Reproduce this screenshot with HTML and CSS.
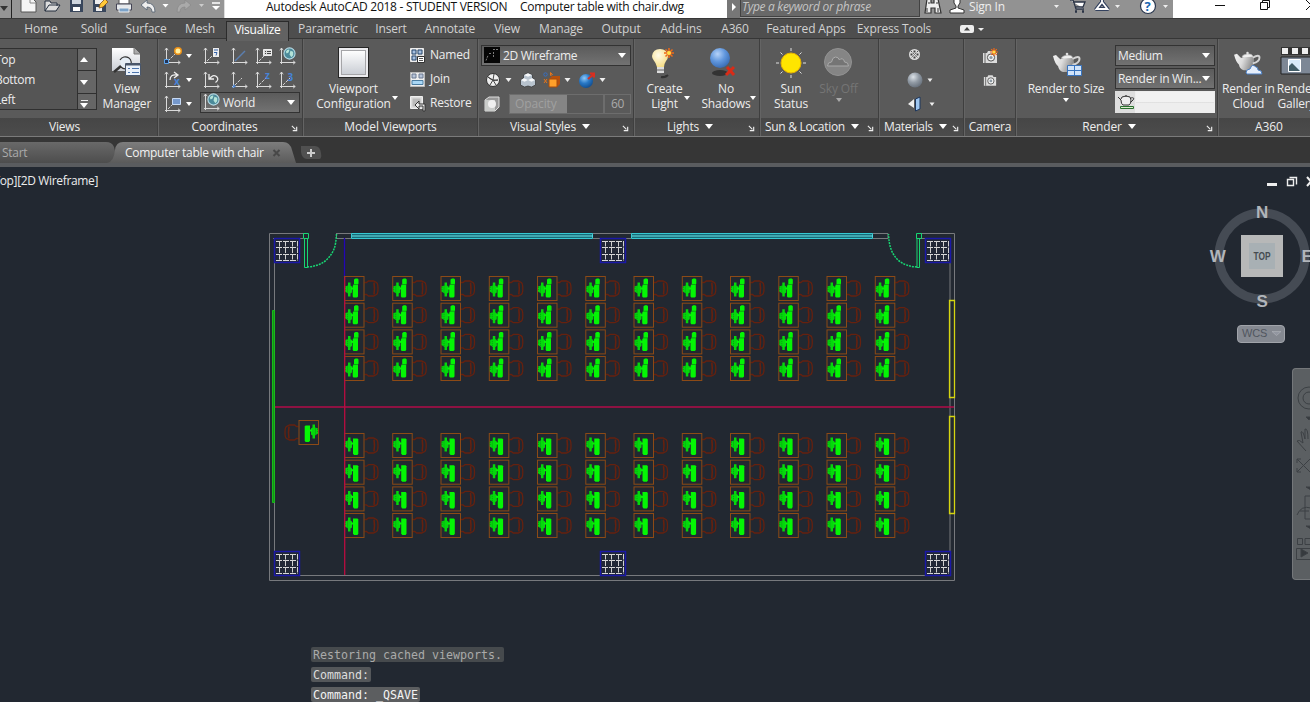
FILE: index.html
```html
<!DOCTYPE html>
<html lang="en">
<head>
<meta charset="utf-8">
<title>Autodesk AutoCAD 2018</title>
<link rel="stylesheet" href="styles.css">
</head>
<body>
<svg class="defs" width="0" height="0">
  <defs>
    <linearGradient id="paper" x2="0" y2="1"><stop offset="0" stop-color="#fff"/><stop offset="1" stop-color="#c9cdd4"/></linearGradient>
    <radialGradient id="ball" cx=".38" cy=".3" r=".75"><stop offset="0" stop-color="#b5d2f8"/><stop offset=".5" stop-color="#6197dd"/><stop offset="1" stop-color="#3568b0"/></radialGradient>
    <radialGradient id="grayball" cx=".38" cy=".3" r=".75"><stop offset="0" stop-color="#dce2e8"/><stop offset=".5" stop-color="#929ba5"/><stop offset="1" stop-color="#646d78"/></radialGradient>
    <radialGradient id="blueball" cx=".38" cy=".3" r=".75"><stop offset="0" stop-color="#8ec8f8"/><stop offset=".5" stop-color="#2878c6"/><stop offset="1" stop-color="#114b8c"/></radialGradient>
    <radialGradient id="bulb" cx=".4" cy=".35" r=".7"><stop offset="0" stop-color="#fffbe8"/><stop offset="1" stop-color="#f5dc83"/></radialGradient>
    <linearGradient id="pot" x2="1" y2=".3"><stop offset="0" stop-color="#f4f4f4"/><stop offset=".5" stop-color="#dcdcdc"/><stop offset="1" stop-color="#8f8f8f"/></linearGradient>
    <symbol id="axis" viewBox="0 0 18 18"><path d="M2.500 1v16M1 15.500h15" stroke="#dadada" fill="none"/><path d="M.800 3.300L2.500 1l1.700 2.300M14 13.800l2.300 1.700-2.300 1.700" stroke="#dadada" fill="none" stroke-width=".9"/></symbol>
    <symbol id="diag" viewBox="0 0 18 18"><path d="M4 14l7-7" stroke="#d0d0d0" stroke-dasharray="3 1"/></symbol>
    <symbol id="globe" viewBox="0 0 14 14"><circle cx="7" cy="7" r="6" fill="#4b8a9a" stroke="#b6dbe6" stroke-width="1.200"/><path d="M3 5q2-3 4-2l-1 3-2 1zM8 4l3 1v4l-2 2-2-3z" fill="#b4e3d8"/></symbol>
    <symbol id="launch" viewBox="0 0 8 8"><path d="M1 1l4 4" stroke="#eee" stroke-width="1.200"/><path d="M6.500 2v4.500H2" stroke="#eee" fill="none" stroke-width="1.300"/></symbol>
    <symbol id="spark" viewBox="0 0 10 10"><path d="M5 0v10M0 5h10M1.500 1.500l7 7M8.500 1.500l-7 7" stroke="#f06a18" stroke-width="1.500"/><circle cx="5" cy="5" r="2" fill="#ffe14a"/></symbol>
    <symbol id="teapot" viewBox="0 0 30 24"><path d="M1 5l3-1 3 3q2 2 2 1 6-3 12-1 2 5 0 9-2 5-5 5h-5q-4-1-5-6Q3 13 1 5z" fill="url(#pot)"/><path d="M20.500 8q7-4 7 0 0 4-7 6" fill="none" stroke="#d4d4d4" stroke-width="2"/><path d="M9 7.500q1-3 6-3.500t6 3" fill="#eee" stroke="#999" stroke-width=".6"/><circle cx="15" cy="3" r="1.300" fill="#ddd"/></symbol>
    <symbol id="camera" viewBox="0 0 16 14"><path d="M1 3h4l1-2h5l1 2h3v10H1z" fill="#ddd"/><path d="M3 3v10" stroke="#666"/><circle cx="9" cy="7.500" r="3.600" fill="#f2f2f2" stroke="#555"/><circle cx="9" cy="7.500" r="1.600" fill="#8d9aa5"/></symbol>
    <g id="desk">
      <path d="M20.500 6.500h2l2-1.500h5l3 1.500q1.500 1 1.500 6t-1.500 6l-3 1.500h-5l-2-1.500h-2" stroke="#66210f" stroke-width="1.300" fill="none"/>
      <path d="M30 6.500q1 6 0 12" stroke="#66210f" stroke-width="1.600" fill="none"/>
      <rect x=".5" y=".5" width="19.500" height="24" fill="#222831" stroke="#8c4a16"/>
    </g>
    <g id="pcA"><path d="M10 3.500l1.500-1h2l1 1v4l-.5 1v12l-1 1h-3.500l-.8-1V10l1.300-2z" fill="#04f604"/><path d="M9 8.500h5" stroke="#127a1c" stroke-width=".7"/><path d="M4 6.500h2.500v3l1.500 1v6l-1.500 1v3H4v-3l-3-2v-5l3-1z" fill="#04d80b"/><path d="M1.500 11v4M3.500 9.500v7" stroke="#0b7f18" stroke-width=".7" stroke-dasharray="1 1"/><path d="M7 12.500h2.500" stroke="#06f407" stroke-width="2"/></g>
    <g id="pcB"><path d="M9 5.500h4.500l.8 1v14l-.8 1.500h-3.500l-1-1.500z" fill="#04f604"/><path d="M4 4.500h2.500v3l1.500 1v6l-1.500 1v3H4v-3l-3-2v-5l3-1z" fill="#04d80b"/><path d="M1.500 9v4M3.500 7.500v7" stroke="#0b7f18" stroke-width=".7" stroke-dasharray="1 1"/><path d="M7 10.500h2.500" stroke="#06f407" stroke-width="2"/></g>
    <g id="rowA"><use href="#desk"/><use href="#pcA"/></g>
    <g id="rowB"><use href="#desk"/><use href="#pcB"/></g>
    <g id="colA"><use href="#rowA"/><use href="#rowA" y="26.700"/><use href="#rowA" y="53.400"/><use href="#rowA" y="80"/></g>
    <g id="colB"><use href="#rowB"/><use href="#rowB" y="26.700"/><use href="#rowB" y="53.400"/><use href="#rowB" y="80"/></g>
    <g id="pillar"><rect x=".5" y=".5" width="25" height="24" fill="#222836" stroke="#1b18a8" stroke-width="1.500"/><path d="M2 3.500h21M2 9.500h21M2 16.500h21M2 22.500h21" stroke="#d8d8d8" stroke-dasharray="6 1"/><path d="M5.500 3v20M11.500 3v20M18.500 3v20M23.500 3v20" stroke="#d0d0d0" stroke-dasharray="5.500 1"/></g>
  </defs>
</svg>

<header class="titlebar">
  <div class="app-button"><i class="caret dark"></i></div>
  <div class="quick">
    <svg width="213" height="18" viewBox="12 0 213 18">
      <path d="M21-3h10l5 5v10H21z" fill="#f5f5f5" stroke="#555"/><path d="M30-3v6h6" fill="none" stroke="#888"/>
      <path d="M45 11V1h5l1 2h6v3M45 11l4-6h11l-4 6z" fill="#ddd" stroke="#222c3c"/>
      <path d="M70-2h13v14H70z" fill="#38465c"/><path d="M72-2h9v6h-9z" fill="#cfd6df"/><path d="M73 7h7v4h-7z" fill="#fff"/>
      <path d="M93-2h13v14H93z" fill="#38465c"/><path d="M95-2h9v6h-9zM96 7h6v4h-6z" fill="#eee"/><path d="M99 8l1-4 5-5 3 3-5 5z" fill="#ffc93a" stroke="#81501b" stroke-width=".8"/>
      <path d="M119-1h10v5h-10z" fill="#fff" stroke="#555"/><path d="M116.500 4h15v6h-15z" fill="#e5e8eb" stroke="#445"/><path d="M119 8h10v4h-10z" fill="#7ba2c8" stroke="#eee"/>
      <path d="M141 5l6-5v3q8 0 8 9h-3q0-5-5-5v3z" fill="#eee" stroke="#526070" stroke-width=".8"/>
      <path d="M191 5l-6-5v3q-8 0-8 9h3q0-5 5-5v3z" fill="#aaa" stroke="#8c8c8c" stroke-width=".8"/>
      <path d="M162.500 4h6l-3 3.500zM212 6h8l-4 4z" fill="#fff"/><path d="M199 4h5l-2.500 3z" fill="#ccc"/><path d="M212 3h8" stroke="#fff" stroke-width="1.500"/>
    </svg>
  </div>
  <div class="title"><span class="t1">Autodesk AutoCAD 2018 - STUDENT VERSION</span><span>Computer table with chair.dwg</span></div>
  <div class="search-arrow"><svg width="6" height="8"><path d="M1 0l4 4-4 4z" fill="#fff"/></svg></div>
  <div class="search">Type a keyword or phrase</div>
  <div class="account">
    <svg width="45" height="18" viewBox="919 0 45 18"><path d="M926-1h4v4h3v-4h4l3 14h-6V8h-4v5h-6zM927 3h2M935 3h2" fill="#eee" stroke="#333" stroke-width="1.200"/><path d="M926 8v4M937 8v4" stroke="#333"/><path d="M953-2h6v5l-2 3v2l6 2v3h-14v-3l6-2V6l-2-3z" fill="#fff" stroke="#333"/></svg>
    <span class="signin">Sign In</span>
    <svg width="125" height="18" viewBox="1048 0 125 18"><path d="M1054 5h5l-2.500 3zM1115 5h5l-2.500 3zM1163 5h5l-2.500 3z" fill="#eee"/><path d="M1070 0h3l3 9h8M1073 2h12l-2 5h-8" fill="#fff" stroke="#2a3345" stroke-width="1.300"/><path d="M1075 11.500h2M1082 11.500h2" stroke="#2a3345" stroke-width="2.500"/><path d="M1102-2v4l-5.500 7h11L1102 2" stroke="#33415e" stroke-width="4" fill="none" stroke-linejoin="round"/><path d="M1102-2v4l-5.500 7h11L1102 2" stroke="#fff" stroke-width="1.800" fill="none"/><circle cx="1148" cy="6" r="7.500" fill="#fff" stroke="#29374f" stroke-width="1.200"/><text x="1144.500" y="11" class="help">?</text></svg>
  </div>
  <div class="window-controls"><svg width="137" height="18" viewBox="1173 0 137 18"><path d="M1215 5.500h10M1260.500 2.500h7v7h-7zM1262.500 2V.500h7v7h-2M1306 0l9 9M1306 10l9-9" fill="none" stroke="#111"/></svg></div>
</header>

<nav class="menu">
  <a class="m-home">Home</a><a class="m-solid">Solid</a><a class="m-surface">Surface</a><a class="m-mesh">Mesh</a><a class="m-vis active">Visualize</a><a class="m-param">Parametric</a><a class="m-insert">Insert</a><a class="m-anno">Annotate</a><a class="m-view">View</a><a class="m-manage">Manage</a><a class="m-output">Output</a><a class="m-addins">Add-ins</a><a class="m-a360">A360</a><a class="m-feat">Featured Apps</a><a class="m-expr">Express Tools</a>
  <span class="pill"><svg width="24" height="8"><rect width="14" height="8" rx="2" fill="#eee"/><path d="M4 5.500h6L7 2z" fill="#444"/><path d="M18 3h6l-3 3z" fill="#eee"/></svg></span>
</nav>

<main class="ribbon">
  <section class="panel p-views">
    <div class="body">
      <div class="viewlist"><div class="names"><span>Top</span><span>Bottom</span><span>Left</span></div><div class="steps"><b><i class="caret up"></i></b><b><i class="caret"></i></b><b><i class="caret bar"></i></b></div></div>
      <div class="big viewmgr"><svg width="32" height="32"><path d="M1 1h22l6 6v17H1z" fill="url(#paper)"/><path d="M23 1v6h6" fill="#aaa" stroke="#777"/><path d="M9 13a6 6 0 1 1 1 7" fill="#e5edf5" stroke="#333" stroke-width="1.200"/><path d="M10 19l-7 6" stroke="#333" stroke-width="2.500"/><path d="M14.500 16.500h15v12h-15z" fill="#e9f1fa" stroke="#49566a"/><path d="M15 17h14v1.500H15z" fill="#49566a"/><path d="M17 21.500h2M17 25.500h2M21 21.500h7M21 25.500h7" stroke="#4c75ae"/></svg><span>View<br>Manager</span></div>
    </div><footer>Views</footer>
  </section>

  <section class="panel p-coord">
    <div class="body ucs">
      <span class="ico"><svg width="18" height="18"><use href="#axis"/><use href="#diag"/><path d="M.500 12.500h4v4h-4z" fill="#235" stroke="#5da6ee"/><circle cx="14" cy="4" r="4" fill="#ee9218"/><circle cx="14" cy="4" r="2.500" fill="#fff0a0"/></svg><i class="caret sm"></i></span>
      <span class="ico"><svg width="18" height="18"><use href="#axis"/><use href="#diag"/><path d="M9.500.500h7v10h-7z" fill="#eee" stroke="#555"/><path d="M11 3h4M11 5.500h3l-1 3" stroke="#3563aa" fill="none"/></svg></span>
      <span class="ico"><svg width="18" height="18"><use href="#axis"/><path d="M4 14L14 4" stroke="#5b7fb0" stroke-width="1.500"/></svg></span>
      <span class="ico"><svg width="18" height="18"><use href="#axis"/><use href="#diag"/><path d="M8.500 2.500h8v6h-8z" fill="#ddd" stroke="#eee"/><path d="M10 4.500h1M12 4.500h4M10 6.500h1M12 6.500h4" stroke="#444"/></svg></span>
      <span class="ico"><svg width="18" height="18"><use href="#axis"/><use href="#globe" x="4" width="13" height="13"/></svg></span>
      <span class="ico"><svg width="18" height="18"><use href="#axis"/><path d="M6 9q0-6 7-5M10 1l4 3-4 3" fill="none" stroke="#eee" stroke-width="1.300"/><text x="10" y="14" class="letter">x</text></svg><i class="caret sm"></i></span>
      <span class="ico"><svg width="18" height="18"><use href="#axis"/><path d="M6 3v5h5M6.500 8q3-5 7-2.500 3 3-1 6" fill="none" stroke="#eee" stroke-width="1.300"/></svg></span>
      <span class="ico"><svg width="18" height="18"><use href="#axis"/><use href="#diag"/><path d="M1 17l2-4 2 3z" fill="#4c85d3"/></svg></span>
      <span class="ico"><svg width="18" height="18"><use href="#axis"/><use href="#diag"/><text x="10" y="8" class="letter">z</text></svg></span>
      <span class="ico"><svg width="18" height="18"><use href="#axis"/><use href="#diag"/><text x="8.500" y="9.500" class="letter">3</text></svg></span>
      <span class="ico"><svg width="18" height="18"><use href="#axis"/><use href="#diag"/><path d="M8.500 3.500h8v6h-8z" fill="#7699cd" stroke="#c7daf4"/></svg><i class="caret sm"></i></span>
      <div class="combo world"><svg width="18" height="18"><use href="#axis"/><use href="#globe" x="4" width="13" height="13"/></svg><span>World</span><i class="caret"></i></div>
    </div><footer>Coordinates<svg class="launch"><use href="#launch"/></svg></footer>
  </section>

  <section class="panel p-model">
    <div class="body">
      <div class="big viewport"><svg width="32" height="32"><rect x=".5" y=".5" width="30" height="30" fill="#ececef" stroke="#262626"/><rect x="3.500" y="3.500" width="24" height="24" fill="url(#paper)" stroke="#a5a5a8"/></svg><span>Viewport<br>Configuration</span></div><i class="caret sm low"></i>
      <div class="side">
        <span><svg width="16" height="16"><path d="M.500.500h13v13H.500z" fill="#ddd" stroke="#eee"/><path d="M2 2h4v4H2zM8 2h4v4H8zM2 8h4v4H2z" fill="#a5bfe0" stroke="#29486e"/><path d="M7.500 8.500h7v6h-7z" fill="#fff" stroke="#333"/><path d="M9 10.500h4M9 12.500h4" stroke="#555"/></svg>Named</span>
        <span><svg width="16" height="16"><path d="M.500.500h14v14H.500z" fill="#eee" stroke="#bbb"/><path d="M2 2h4v4H2zM9 2h4v4H9z" fill="#b6c3d8" stroke="#6b7890"/><path d="M2 8.500h11v4H2z" fill="#a9d7f6" stroke="#4b7da2"/></svg>Join</span>
        <span><svg width="16" height="16"><path d="M.500.500h12v12H.500z" fill="#ddd" stroke="#eee"/><path d="M2.500 2.500h8v8h-8z" fill="#bbb"/><path d="M9 5v3h6v7h-2v-5H9v3L5 9z" fill="#eee" stroke="#333"/></svg>Restore</span>
      </div>
    </div><footer>Model Viewports</footer>
  </section>

  <section class="panel p-style">
    <div class="body">
      <div class="combo wire"><svg width="16" height="16"><path d="M0 0h16v16H0z" fill="#060606"/><path d="M2 13.500l2-5M5 6.500h3M9 2.500h5M9.500 5v6" stroke="#999" fill="none" stroke-width=".8" stroke-dasharray="2 1"/></svg><span>2D Wireframe</span><i class="caret"></i></div>
      <div class="stylerow">
        <svg width="135" height="18" viewBox="484 70 135 18"><circle cx="493" cy="79" r="6.500" fill="#eee" stroke="#333"/><path d="M493 79l-5-3M493 79l1-6M493 79l5 0M493 79l3 5M493 79l-3 5M488 76q5 5 10 3" stroke="#444" fill="none"/><path d="M505.500 77h6l-3 4zM564.500 77h6l-3 4zM599.500 77h6l-3 4z" fill="#eee"/><path d="M520.500 79l3-2v-3l4.500-2 4.500 2v3l3 2v5l-4 2-3.500-1-3.500 1-4-2z" fill="#b8c3ce" stroke="#333" stroke-width=".7"/><path d="M524 74l4-1.700 4 1.700-4 1.800zM521 79l3-1.700 4 1.700-3.500 1.700zM528 79l4-1.700 3 1.700-3.500 1.700z" fill="#f6f8fa"/><path d="M549 78l3-3h8v8l-3 3h-8z" fill="#b7500c"/><path d="M549 78h8v8h-8z" fill="#ffa02a" stroke="#a44b0f"/><circle cx="545.500" cy="73.500" r="1.700" fill="none" stroke="#386fc2"/><path d="M544 78l3 4M547 78l-3 4M550.500 71.500l2 2-2 1z" stroke="#e97518" fill="none"/><circle cx="586" cy="80" r="7" fill="url(#blueball)"/><path d="M588 78l6-5M590 72.500h4v4" stroke="#d92e20" stroke-width="2" fill="none"/></svg>
      </div>
      <div class="opacityrow"><svg width="16" height="16"><path d="M1 4l4-3h10v10l-4 4H1z" fill="#999" stroke="#ddd"/><path d="M1 4h10v11H1z" fill="#c9cbc9"/><circle cx="8" cy="8" r="4" fill="#efefef"/></svg><div class="slider"><span>Opacity</span></div><div class="sixty">60</div></div>
    </div><footer><span>Visual Styles</span><i class="caret"></i><svg class="launch"><use href="#launch"/></svg></footer>
  </section>

  <section class="panel p-lights">
    <div class="body">
      <div class="big light"><svg width="32" height="32"><path d="M11 30q4 1 7-2" stroke="#333" stroke-width="2"/><path d="M7 20Q6 16 3.500 13 2 11 2 9q1-7 8-7t8 7q0 3-2 5-2 3-2 6z" fill="url(#bulb)"/><path d="M7 20h7v6H7z" fill="#ddd"/><path d="M7 23h7M8.500 26.500h4" stroke="#666"/><use href="#spark" x="14" y="1" width="10" height="10"/></svg><span>Create<br>Light</span></div><i class="caret sm low"></i>
      <div class="big shadow"><svg width="32" height="32"><ellipse cx="11" cy="26" rx="8" ry="3" fill="#333"/><circle cx="11" cy="11" r="10" fill="url(#ball)"/><path d="M18 20l7 8M25 20l-8 8" stroke="#d92b17" stroke-width="3"/></svg><span>No<br>Shadows</span></div><i class="caret sm low"></i>
    </div><footer><span>Lights</span><i class="caret"></i><svg class="launch"><use href="#launch"/></svg></footer>
  </section>

  <section class="panel p-sun">
    <div class="body">
      <div class="big sun"><svg width="32" height="32"><path d="M16 1v30M1 16h30M5.500 5.500l21 21M26.500 5.500l-21 21" stroke="#e0e0e0"/><circle cx="16" cy="16" r="12" fill="#5a5a5a"/><circle cx="16" cy="16" r="10" fill="#ffe500" stroke="#e8b400"/></svg><span>Sun<br>Status</span></div>
      <div class="big sky"><svg width="32" height="32"><circle cx="15" cy="15" r="13.500" fill="#858585" stroke="#929292"/><path d="M4.500 19q0-4 4-4 1-5 4-5 3 0 4 3 1-2 3-1 2 1 2 3 4 0 4 4z" fill="#757575" stroke="#aaa"/></svg><span>Sky Off</span><i class="caret sm"></i></div>
    </div><footer><span>Sun &amp; Location</span><i class="caret"></i><svg class="launch"><use href="#launch"/></svg></footer>
  </section>

  <section class="panel p-mat">
    <div class="body"><svg width="84" height="79" viewBox="880 38 84 79"><circle cx="914.500" cy="53.500" r="5.500" fill="#ddd"/><path d="M913.500 49.500h2v2h-2zM913.500 55.500h2v2h-2zM910.500 52.500h2v2h-2zM916.500 52.500h2v2h-2z" fill="#444"/><path d="M911 50l7 7M918 50l-7 7" stroke="#555" stroke-dasharray="1.500 1"/><circle cx="915" cy="79" r="7.500" fill="url(#grayball)"/><path d="M927.500 77.500h5l-2.500 3.500zM929.500 101.500h5l-2.500 3.500z" fill="#eee"/><path d="M908 103l6-5v9z" fill="#eee"/><path d="M915.500 98l4.500-2v12l-4.500 2z" fill="#9ec6f0" stroke="#1d365c"/></svg></div>
    <footer><span>Materials</span><i class="caret"></i><svg class="launch"><use href="#launch"/></svg></footer>
  </section>

  <section class="panel p-cam">
    <div class="body"><svg width="16" height="16"><use href="#camera" y="2" width="16" height="14"/><use href="#spark" x="8" width="8" height="8"/></svg><svg width="14" height="13"><use href="#camera" width="14" height="13"/></svg></div><footer>Camera</footer>
  </section>

  <section class="panel p-render">
    <div class="body">
      <div class="big size"><svg width="32" height="32"><use href="#teapot" y="4" width="30" height="24"/><path d="M15.500 18.500h14v10h-14z" fill="#d1e4fa" stroke="#3974be"/><path d="M22.500 19v9M16 23.500h13" stroke="#3974be"/></svg><span>Render to Size</span><i class="caret sm"></i></div>
      <div class="render-options"><div class="combo">Medium<i class="caret"></i></div><div class="combo">Render in Win...<i class="caret"></i></div><div class="progress"><svg width="20" height="20"><path d="M3 6l3 3q0 4 2 5h6q2-1 2-5l-1-3q-4-2-8 0L6 8M16 7q4-1 2 2l-2 2M10 5h2" fill="#eee" stroke="#333"/><path d="M5.500 15.500h13v2h-13z" fill="#d9eccb" stroke="#2a702f"/></svg><span></span></div></div>
    </div><footer><span>Render</span><i class="caret"></i><svg class="launch"><use href="#launch"/></svg></footer>
  </section>

  <section class="panel p-a360">
    <div class="body">
      <div class="big cloud"><svg width="32" height="32"><use href="#teapot" x="1" y="3" width="29" height="23"/><path d="M14 26q0-4 4-4 2-6 6-2 2 0 2 3 4 0 4 4H15z" fill="#e5eefb" stroke="#4a7ec2"/></svg><span>Render in<br>Cloud</span></div>
      <div class="big gallery"><svg width="32" height="32"><path d="M0 0h32v8H0z" fill="#333"/><path d="M1 1h6v6H1zM11 1h6v6h-6zM21 1h6v6h-6z" fill="#eee"/><path d="M0 10h32v17H0z" fill="#7d8795" stroke="#222"/><path d="M7.500 12.500h12v12h-12z" fill="#d9ebfa" stroke="#fff"/><path d="M8 24v-5l3-3 8 8z" fill="#425d67"/></svg><span>Render<br>Gallery</span></div>
    </div><footer>A360</footer>
  </section>
</main>

<div class="filetabs">
  <svg class="tabshape" width="330" height="30"><defs><linearGradient id="tab1" x2="0" y2="1"><stop stop-color="#696969"/><stop offset="1" stop-color="#4d4d4d"/></linearGradient><linearGradient id="tab2" x2="0" y2="1"><stop stop-color="#7d7d7d"/><stop offset="1" stop-color="#5b5b5b"/></linearGradient></defs><path d="M0 5h106q6 0 8 5l4 16H0z" fill="url(#tab1)"/><path d="M107 26q7-1 8-13 1-8 8-8h160q7 0 9 8l4 13z" fill="url(#tab2)"/><path d="M301 9h14q5 0 6 7 1 6-2 6h-12q-5 0-6-7z" fill="#505050"/><path d="M307 16h8M311 12v8" stroke="#ccc" stroke-width="2"/><path d="M273.500 13l6 6M279.500 13l-6 6" stroke="#484848" stroke-width="2"/></svg>
  <div class="tabtext"><span class="start">Start</span><span class="doc">Computer table with chair</span></div>
</div>

<div class="canvas">
  <svg class="drawing" width="1310" height="535" viewBox="0 167 1310 535">
    <g fill="none" stroke="#77797d">
      <path d="M269.500 233.500H304M337 233.500h551M921 233.500h33.500v347h-685v-347M274.500 238v338M274 575.500h677M950 576V238M336.500 233v5.500h15M593 238.500h38M873 238.500h15v-5M273 238.500h30M921 238.500h29"/>
      <path d="M351.500 233.500h241v5h-241zM631.500 233.500h241v5h-241z" fill="#176c79" stroke="#36c9d3"/><path d="M352 236h241M632 236h241" stroke="#6de2e8"/>
      <path d="M344.500 238v39" stroke="#2305b6" stroke-width="1.300"/>
    </g>
    <use href="#pillar" x="274" y="238"/><use href="#pillar" x="600" y="238"/><use href="#pillar" x="925" y="238"/><use href="#pillar" x="274" y="551"/><use href="#pillar" x="600" y="551"/><use href="#pillar" x="925" y="551"/>
    <g fill="none" stroke="#18d673"><path d="M303.500 233.500h5v5h-5zM304.500 238.500h3v29h-3zM916.500 233.500h5v5h-5zM917 238.500h2.500v29H917z"/><path d="M307 267q20-1 27-18 2-5 2.500-15M917 267q-20-1-26-18-2-5-2.500-15" stroke-width="1.500" stroke-dasharray="2 1"/></g>
    <path d="M272.500 310.500h2v192h-2z" fill="#168f19" stroke="#16bb19"/>
    <path d="M949.500 300.500h5v97h-5zM949.500 416.500h5v97h-5z" fill="none" stroke="#d5d510" stroke-width="1.300"/>
    <g><use href="#colA" x="344" y="276"/><use href="#colA" x="392.200" y="276"/><use href="#colA" x="440.500" y="276"/><use href="#colA" x="488.800" y="276"/><use href="#colA" x="537" y="276"/><use href="#colA" x="585.300" y="276"/><use href="#colA" x="633.500" y="276"/><use href="#colA" x="681.800" y="276"/><use href="#colA" x="730" y="276"/><use href="#colA" x="778.300" y="276"/><use href="#colA" x="826.500" y="276"/><use href="#colA" x="874.800" y="276"/></g>
    <g><use href="#colB" x="344" y="433"/><use href="#colB" x="392.200" y="433"/><use href="#colB" x="440.500" y="433"/><use href="#colB" x="488.800" y="433"/><use href="#colB" x="537" y="433"/><use href="#colB" x="585.300" y="433"/><use href="#colB" x="633.500" y="433"/><use href="#colB" x="681.800" y="433"/><use href="#colB" x="730" y="433"/><use href="#colB" x="778.300" y="433"/><use href="#colB" x="826.500" y="433"/><use href="#colB" x="874.800" y="433"/></g>
    <use href="#rowB" transform="translate(319 420) scale(-1 1)"/>
    <path d="M275 407h679" stroke="#b30b49" stroke-width="1.500"/><path d="M344.700 277v298" stroke="#ba0c40" stroke-width="1.300"/>
  </svg>
  <span class="viewlabel">[-][Top][2D Wireframe]</span>
  <svg class="viewcontrols" width="44" height="14" viewBox="1266 175 44 14"><path d="M1267 183h10v3h-10z" fill="#eee"/><path d="M1287.500 179.500h6v6h-6zM1289.500 177.500h7v7" fill="none" stroke="#eee" stroke-width="1.400"/><path d="M1307 177l8 9M1307 186l8-9" stroke="#eee" stroke-width="2"/></svg>
  <div class="cube"><svg width="104" height="112" viewBox="1206 202 104 112"><circle cx="1262" cy="256" r="43" fill="none" stroke="#454b54" stroke-width="9"/><rect x="1241" y="235" width="42" height="42" fill="#b7b8b8"/><path d="M1249 243h26v26h-26z" fill="#a8b0b4"/><g class="compass"><text x="1262" y="218">N</text><text x="1262" y="307">S</text><text x="1217.500" y="262">W</text><text x="1307" y="262">E</text></g><text x="1262" y="260" class="topface" textLength="17" lengthAdjust="spacingAndGlyphs">TOP</text></svg><div class="wcs">WCS<svg width="9" height="5"><path d="M0 .5h9l-4.500 4z" fill="#9296a0" stroke="#b0b3ba" stroke-width=".6"/></svg></div></div>
  <div class="navbar"><svg width="17" height="210" viewBox="1293 369 17 210"><g fill="none" stroke="#3c4044"><circle cx="1309" cy="398" r="11"/><circle cx="1309" cy="398" r="6"/><path d="M1306 417h5l-2 3z" fill="#363a3e"/><path d="M1306 451l-9-10q2-2 6 2l-2-11q2-2 4 7v-10q3-1 3 10M1297 459l14 14M1297 472l13-13M1297 463v-4h4M1297 468v4h4M1305 496v23h6v-23zM1297 515q4-10 14-7M1300 511h9M1297.500 538.500h5v6h-5zM1305 538.500h8v6h-8zM1296.500 548.500h20v11h-20z"/><path d="M1301 549v8l7-4zM1306 487h5v3zM1306 526h5v3z" fill="#363a3e"/></g></svg></div>
  <div class="command"><span class="old">Restoring cached viewports.</span><span>Command:</span><span class="last">Command: _QSAVE</span></div>
</div>
</body>
</html>
```
FILE: styles.css
```css
* { box-sizing: border-box; }
body { margin: 0; width: 1310px; height: 702px; overflow: hidden; background: #222831; color: #ededed; font: 12px/15px "Open Sans", "Noto Sans", sans-serif; letter-spacing: -.3px; }
svg { display: block; flex: none; overflow: visible; }
.defs { position: absolute; }
.caret { flex: none; width: 0; height: 0; border: 4px solid transparent; border-top: 5px solid #fff; border-bottom: 0; }
.caret.sm { border-width: 4px 3px 0; }
.caret.dark { border-top-color: #333; }
.caret.up { border-top: 0; border-bottom: 5px solid #fff; }
.caret.bar { position: relative; top: 1px; }
.caret.bar::before { content: ""; position: absolute; left: -3px; top: -8px; width: 7px; height: 1px; background: #eee; }

.titlebar { display: flex; height: 18px; color: #111; background: #9a9a9a; overflow: hidden; }
.app-button { width: 12px; height: 18px; padding: 12px 0 0 0; background: #959595; border-right: 1px solid #222; }
.quick { width: 213px; background: #969696; border-right: 1px solid #ddd; }
.title { display: flex; align-items: center; width: 502px; padding: 0 0 5px 41px; background: #fff; white-space: nowrap; letter-spacing: -.28px; }
.t1 { width: 254px; }
.search-arrow { display: grid; place-items: center; width: 13px; padding-bottom: 4px; background: #777; }
.search { width: 180px; height: 17px; padding: 0 4px 0 1px; line-height: 13px; color: #c4c4c4; background: #686868; border: solid #424242; border-width: 0 1px 1px; font-style: italic; letter-spacing: -.3px; }
.account { display: flex; width: 253px; background: #929292; }
.signin { width: 84px; padding-left: 4px; line-height: 14px; color: #eee; letter-spacing: -.2px; }
.window-controls { width: 137px; background: #fff; overflow: hidden; }
.help { font: bold 13px "Open Sans", sans-serif; fill: #1766b1; }

.menu { display: flex; height: 21px; background: #4e4e4e; border-top: 1px solid #383838; border-bottom: 1px solid #363636; letter-spacing: -.15px; }
.menu a { height: 20px; line-height: 20px; text-align: center; white-space: nowrap; color: #d2d2d2; }
.m-home { width: 50px; margin-left: 16px; }
.m-solid { width: 40px; margin-left: 8px; }
.m-surface { width: 56px; margin-left: 4px; }
.m-mesh { width: 40px; margin-left: 6px; }
.menu .active { width: 63px; height: 20px; margin: 2px 0 0 6px; line-height: 16px; color: #fff; background: #626262; border: 1px solid #2b2b2b; border-bottom: 0; letter-spacing: -.25px; }
.m-param { width: 66px; margin-left: 6px; }
.m-insert { width: 38px; margin-left: 11px; }
.m-anno { width: 60px; margin-left: 10px; }
.m-view { width: 34px; margin-left: 10px; }
.m-manage { width: 52px; margin-left: 11px; }
.m-output { width: 46px; margin-left: 11px; }
.m-addins { width: 54px; margin-left: 10px; }
.m-a360 { width: 34px; margin-left: 10px; }
.m-feat { width: 84px; margin-left: 12px; }
.m-expr { width: 76px; margin-left: 8px; }
.pill { padding: 6px 0 0 28px; }

.ribbon { display: flex; width: 1320px; height: 98px; background: #5a5a5a; border-bottom: 1px solid #7b7b7b; }
.panel { flex: none; display: flex; flex-direction: column; border-right: 1px solid #3f3f3f; border-left: 1px solid #646464; }
.body { display: flex; height: 79px; }
.panel footer { position: relative; display: flex; align-items: center; justify-content: center; gap: 6px; height: 18px; padding-bottom: 1px; background: linear-gradient(#464646, #4c4c4c); white-space: nowrap; letter-spacing: -.2px; }
.launch { position: absolute; right: 4px; bottom: 4px; width: 7px; height: 7px; }
.p-views { width: 158px; border-left: 0; }
.p-views footer { padding-right: 28px; }
.p-coord { width: 145px; }
.p-coord footer { padding-right: 12px; }
.p-model { width: 175px; }
.p-model footer, .p-a360 footer { letter-spacing: -.1px; }
.p-style { width: 156px; }
.p-style footer { padding-right: 12px; }
.p-lights { width: 126px; }
.p-lights footer { padding-right: 14px; }
.p-sun { width: 119px; }
.p-sun footer { justify-content: flex-start; padding-left: 4px; letter-spacing: -.3px; }
.p-mat { width: 85px; }
.p-mat footer { justify-content: flex-start; padding-left: 4px; letter-spacing: -.35px; }
.p-cam { width: 52px; }
.p-render { width: 202px; }
.p-render footer { padding-right: 16px; }
.p-a360 { width: 102px; }

.viewlist { display: flex; width: 98px; height: 62px; margin-top: 9px; border: 1px solid #303030; border-left: 0; background: #555; overflow: hidden; }
.names { width: 83px; padding-top: 3px; margin-left: -5px; display: flex; flex-direction: column; gap: 5px; }
.steps { width: 19px; border-left: 1px solid #303030; }
.steps b { display: grid; place-items: center; height: 22px; padding-right: 5px; background: #666; border-bottom: 1px solid #303030; }
.steps b:nth-child(2) { height: 23px; }
.big { display: flex; flex-direction: column; align-items: center; text-align: center; white-space: nowrap; padding-top: 8px; letter-spacing: -.15px; }
.big svg { margin-bottom: 2px; }
.low { margin-top: 57px; }
.viewmgr { width: 61px; }
.ucs { display: grid; grid-template: repeat(3, 24px) / 39px 28px 24px 24px 24px; padding: 8px 0 0 5px; }
.ico { display: flex; align-items: center; gap: 4px; height: 18px; }
.ico > svg { width: 18px; height: 18px; }
.letter { font: bold 10px "Open Sans", sans-serif; fill: #4783d6; }
.combo { display: flex; align-items: center; justify-content: space-between; width: 100px; height: 21px; padding: 0 4px 1px 2px; background: linear-gradient(#5b5b5b, #727272); border: 1px solid #333; white-space: nowrap; }
.combo span { margin-right: auto; padding-left: 2px; }
.world { grid-column: 2 / 6; margin: -3px 0 0 -3px; }

.p-model .viewport { width: 84px; padding-left: 15px; }
.p-model .low { margin-left: 4px; }
.side { display: flex; flex-direction: column; gap: 8px; padding: 9px 0 0 12px; letter-spacing: -.2px; }
.side span { display: flex; height: 16px; gap: 4px; line-height: 14px; }
.p-style .body { display: block; padding: 6px 2px 0; }
.wire { width: 150px; }
.wire span { padding-left: 3px; }
.stylerow { height: 28px; padding: 5px 0 0 3px; }
.opacityrow { display: flex; align-items: center; height: 20px; padding-left: 3px; }
.slider { width: 95px; height: 20px; margin-left: 9px; background: #595959; border: 1px solid #6d6d6d; color: #929292; line-height: 18px; }
.slider span { display: block; width: 57px; padding-left: 5px; background: #858585; color: #a0a0a0; letter-spacing: -.1px; }
.sixty { width: 27px; height: 20px; line-height: 18px; border: 1px solid #6d6d6d; text-align: center; color: #aaa; }
.light { width: 52px; padding-left: 7px; }
.light svg, .shadow svg { margin-left: 2px; }
.p-lights .low { width: 6px; margin-left: -3px; margin-right: 3px; }
.shadow { width: 60px; padding-left: 6px; }
.shadow svg { margin-left: -2px; }
.sun { width: 60px; }
.sky { width: 35px; color: #757575; }
.sky .caret { margin-top: 2px; border-top-color: #aaa; }
.p-cam .body { flex-direction: column; align-items: center; gap: 10px; padding-top: 9px; }
.size { width: 98px; letter-spacing: -.25px; }
.size svg { margin-left: 3px; }
.size .caret { margin-top: 2px; }
.render-options { display: flex; flex-direction: column; gap: 2px; padding-top: 6px; }
.progress { display: flex; width: 100px; height: 22px; background: #dedede; }
.progress span { width: 80px; border: 1px solid #eee; background: linear-gradient(#f2f2f2 49%, #ccc 50%, #eee 54%); }
.cloud { width: 58px; padding-left: 3px; }
.gallery { width: 48px; align-items: flex-start; margin-left: 2px; }
.gallery svg { margin-left: 4px; }

.filetabs { height: 30px; background: #363636; border-bottom: 4px solid #5a5c5f; overflow: hidden; }
.tabshape { position: absolute; }
.tabtext { position: relative; display: flex; padding-top: 8px; }
.start { width: 125px; padding-left: 2px; color: #aaa; }
.doc { color: #f2f2f2; letter-spacing: -.28px; }

.canvas { position: relative; height: 535px; overflow: hidden; }
.drawing { position: absolute; }
.viewlabel { position: absolute; top: 6px; left: 0; width: 98px; display: flex; justify-content: flex-end; white-space: nowrap; letter-spacing: -.35px; }
.viewcontrols { position: absolute; right: 0; top: 8px; }
.cube { position: absolute; left: 1206px; top: 35px; }
.compass { font: bold 17px "Liberation Sans", sans-serif; fill: #b1b5ba; text-anchor: middle; }
.topface { font: bold 11px "Liberation Sans", sans-serif; fill: #454b50; text-anchor: middle; letter-spacing: 0; }
.wcs { display: flex; align-items: center; gap: 5px; width: 48px; height: 18px; margin: 11px 0 0 31px; padding: 0 0 2px 4px; color: #51565f; background: #858991; border: 1px solid #a1a4aa; border-radius: 4px; font: 11px "Liberation Sans", sans-serif; letter-spacing: -.2px; }
.navbar { position: absolute; right: 0; top: 201px; width: 18px; height: 212px; background: #5b5f62; border: 1px solid #74777a; border-right: 0; border-radius: 4px 0 0 4px; overflow: hidden; }
.command { position: absolute; left: 311px; top: 480px; display: flex; flex-direction: column; align-items: flex-start; gap: 5px; font: 11.630px/17px "DejaVu Sans Mono", monospace; letter-spacing: 0; }
.command span { padding: 0 2px; height: 15px; color: #ddd; background: #54575a; border-radius: 2px; }
.command .old { color: #aaa; background: #464a4d; }
.command .last { color: #f4f4f4; background: #5c5e60; }
```
